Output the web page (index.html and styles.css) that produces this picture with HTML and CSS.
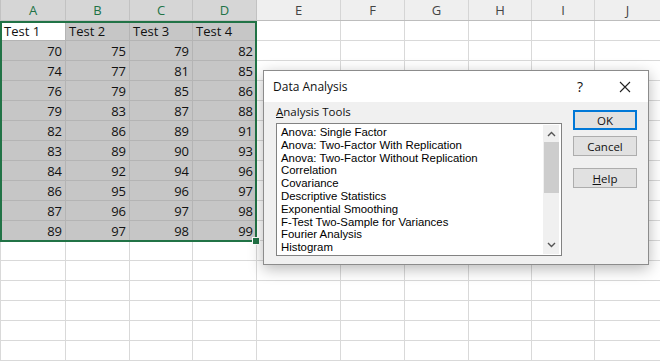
FILE: index.html
```html
<!DOCTYPE html>
<html lang="en">
<head>
    <meta charset="UTF-8">
    <title>Data Analysis</title>
    <link rel="stylesheet" href="styles.css">
</head>
<body>
    <div class="sheet">
        <table class="grid">
            <colgroup>
                <col style="width:65px"><col style="width:64px"><col style="width:63px"><col style="width:64px">
                <col style="width:84px"><col style="width:64px"><col style="width:64px"><col style="width:63px">
                <col style="width:63px"><col style="width:66px">
            </colgroup>
            <thead>
                <tr>
                    <th class="sel">A</th><th class="sel">B</th><th class="sel">C</th><th class="sel">D</th>
                    <th>E</th><th>F</th><th>G</th><th>H</th><th>I</th><th>J</th>
                </tr>
            </thead>
            <tbody id="rows"></tbody>
        </table>

        <!-- selected range A1:D11 -->
        <div class="range"><span class="handle"></span></div>

        <!-- Data Analysis dialog -->
        <div class="dialog">
            <div class="dialog-title">
                <span class="title-text">Data Analysis</span>
                <span class="title-help">?</span>
                <svg class="title-close" width="12" height="12" viewBox="0 0 12 12">
                    <path d="M1 1 L11 11 M11 1 L1 11" stroke="#222" stroke-width="1.1" fill="none"/>
                </svg>
            </div>
            <div class="dialog-body">
                <div class="tools">
                    <div class="tools-label"><u>A</u>nalysis Tools</div>
                    <div class="listbox">
                        <ul class="items">
                            <li>Anova: Single Factor</li>
                            <li>Anova: Two-Factor With Replication</li>
                            <li>Anova: Two-Factor Without Replication</li>
                            <li>Correlation</li>
                            <li>Covariance</li>
                            <li>Descriptive Statistics</li>
                            <li>Exponential Smoothing</li>
                            <li>F-Test Two-Sample for Variances</li>
                            <li>Fourier Analysis</li>
                            <li>Histogram</li>
                        </ul>
                        <div class="scrollbar">
                            <svg class="arrow" width="9" height="6" viewBox="0 0 9 6"><path d="M1 5 L4.5 1.5 L8 5" stroke="#555" stroke-width="1.4" fill="none"/></svg>
                            <div class="thumb"></div>
                            <svg class="arrow down" width="9" height="6" viewBox="0 0 9 6"><path d="M1 1 L4.5 4.5 L8 1" stroke="#555" stroke-width="1.4" fill="none"/></svg>
                        </div>
                    </div>
                </div>
                <div class="buttons">
                    <button class="btn btn-default">OK</button>
                    <button class="btn">Cancel</button>
                    <button class="btn btn-help"><u>H</u>elp</button>
                </div>
            </div>
        </div>
    </div>

    <script>
        // Dados da planilha
        var data = [
            ['Test 1', 'Test 2', 'Test 3', 'Test 4'],
            [70, 75, 79, 82],
            [74, 77, 81, 85],
            [76, 79, 85, 86],
            [79, 83, 87, 88],
            [82, 86, 89, 91],
            [83, 89, 90, 93],
            [84, 92, 94, 96],
            [86, 95, 96, 97],
            [87, 96, 97, 98],
            [89, 97, 98, 99]
        ];
        var body = document.getElementById('rows');
        for (var r = 0; r < 17; r++) {
            var tr = document.createElement('tr');
            for (var c = 0; c < 10; c++) {
                var td = document.createElement('td');
                if (r < data.length && c < 4) {
                    var v = data[r][c];
                    td.textContent = v;
                    td.className = typeof v === 'number' ? 'cell-sel num' : 'cell-sel';
                    if (r === 0 && c === 0) td.className = 'active';
                }
                tr.appendChild(td);
            }
            body.appendChild(tr);
        }
    </script>
</body>
</html>
```

FILE: styles.css
```css
body {
    margin: 0;
    background: #fff;
    font-family: 'Open Sans', 'Noto Sans', sans-serif;
    overflow: hidden;
}

.sheet {
    position: relative;
    width: 660px;
    height: 364px;
}

.grid {
    border-collapse: collapse;
    table-layout: fixed;
    width: 660px;
    font-family: 'Open Sans', sans-serif;
    font-size: 13px;
    color: #111;
}

.grid th {
    height: 20px;
    padding: 0;
    background: #efefef;
    border: 1px solid #d5d5d5;
    border-top: none;
    border-bottom-color: #bdbdbd;
    font-weight: normal;
    font-size: 13px;
    color: #444;
}

.grid th.sel {
    background: #d6d6d6;
    color: #217346;
    border-color: #c2c2c2;
}

.grid td {
    height: 19px;
    padding: 0 3px;
    border: 1px solid #d9d9d9;
    line-height: 18px;
    white-space: nowrap;
    overflow: hidden;
}

.grid td.cell-sel {
    background: #c6c6c6;
    border-color: #b4b4b4;
}

.grid td.active {
    background: #fff;
    border-color: #b4b4b4;
}

.grid td.num {
    text-align: right;
}

.range {
    position: absolute;
    left: 0;
    top: 21px;
    width: 253px;
    height: 217px;
    border: 2px solid #217346;
    pointer-events: none;
}

.handle {
    position: absolute;
    right: -5px;
    bottom: -5px;
    width: 6px;
    height: 6px;
    background: #217346;
    border: 1px solid #fff;
}

.dialog {
    position: absolute;
    left: 263px;
    top: 70px;
    width: 384px;
    height: 193px;
    background: #f0f0f0;
    border: 1px solid #8c8c8c;
    box-shadow: 0 4px 14px rgba(0, 0, 0, 0.28);
    font-family: 'Open Sans', sans-serif;
    font-size: 11.5px;
    color: #111;
}

.dialog-title {
    display: flex;
    align-items: center;
    height: 31px;
    padding: 0 17px 0 9px;
    background: #fff;
    font-size: 12px;
}

.title-text {
    flex: 1;
}

.title-help {
    margin-right: 36px;
    font-size: 14px;
}

.dialog-body {
    display: flex;
    padding: 2px 10px 0 12px;
}

.tools {
    width: 286px;
}

.tools-label {
    height: 19px;
    line-height: 16px;
}

.listbox {
    display: flex;
    height: 131px;
    background: #fff;
    border: 1px solid #828282;
}

.items {
    flex: 1;
    margin: 0;
    padding: 2px 0 0 4px;
    list-style: none;
    font-family: 'Liberation Sans', sans-serif;
    font-size: 11.4px;
    color: #000;
}

.items li {
    height: 12.8px;
    line-height: 12.8px;
    white-space: nowrap;
}

.scrollbar {
    display: flex;
    flex-direction: column;
    align-items: center;
    width: 16px;
    margin: 1px 2px 1px 0;
    background: #f0f0f0;
}

.arrow {
    margin: 6px 0 5px;
}

.arrow.down {
    margin-top: auto;
    margin-bottom: 6px;
}

.thumb {
    width: 15px;
    height: 51px;
    background: #cdcdcd;
}

.buttons {
    display: flex;
    flex-direction: column;
    margin-left: 11px;
    padding-top: 6px;
}

.btn {
    width: 64px;
    height: 20px;
    margin-bottom: 6px;
    padding: 0;
    background: #e1e1e1;
    border: 1px solid #adadad;
    font-family: 'Open Sans', sans-serif;
    font-size: 11.5px;
    color: #111;
}

.btn-default {
    border: 2px solid #0078d7;
}

.btn-help {
    margin-top: 6px;
}
```
